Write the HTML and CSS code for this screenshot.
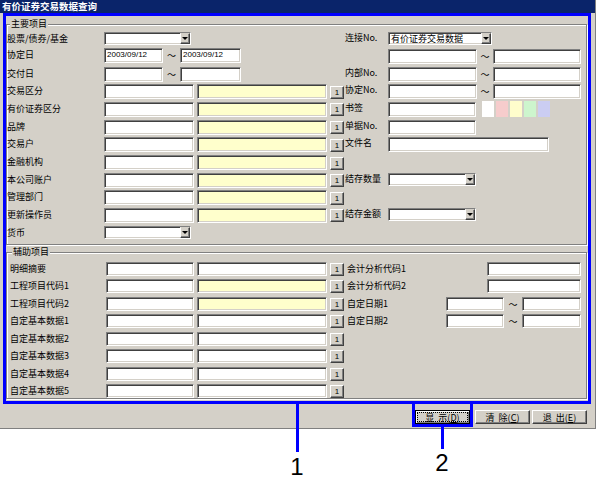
FILE: index.html
```html
<!DOCTYPE html>
<html lang="zh-CN">
<head>
<meta charset="utf-8">
<title>有价证券交易数据查询</title>
<link rel="stylesheet" href="styles.css">
</head>
<body>
<div class="page">
  <div class="window">
    <div class="titlebar">有价证券交易数据查询</div>
    <div class="frame">
      <div class="group main">
        <div class="legend">主要项目</div>
        <div class="grid grid-main">
          <div class="cell"><span class="lbl">股票/债券/基金</span><div class="sel w87"><span class="sv"></span><span class="dd"><i></i></span></div></div>
          <div class="cell"><span class="rl">连接No.</span><div class="sel w104"><span class="sv">有价证券交易数据</span><span class="dd"><i></i></span></div></div>

          <div class="cell"><span class="lbl">协定日</span><span class="in w59 date">2003/09/12</span><span class="tl w17">～</span><span class="in w61 date">2003/09/12</span></div>
          <div class="cell r2"><span class="rl"></span><span class="in w89"></span><span class="tl w16">～</span><span class="in w88"></span></div>

          <div class="cell"><span class="lbl">交付日</span><span class="in w59 date"></span><span class="tl w17">～</span><span class="in w61 date"></span></div>
          <div class="cell"><span class="rl">内部No.</span><span class="in w89"></span><span class="tl w16">～</span><span class="in w88"></span></div>

          <div class="cell"><span class="lbl">交易区分</span><span class="in w90"></span><span class="in w130 yel"></span><span class="b1">1</span></div>
          <div class="cell"><span class="rl">协定No.</span><span class="in w89"></span><span class="tl w16">～</span><span class="in w88"></span></div>

          <div class="cell"><span class="lbl">有价证券区分</span><span class="in w90"></span><span class="in w130 yel"></span><span class="b1">1</span></div>
          <div class="cell"><span class="rl">书签</span><span class="in w88"></span>
            <span class="swatches"><span class="sw s-white"></span><span class="sw s-pink"></span><span class="sw s-yellow"></span><span class="sw s-green"></span><span class="sw s-blue"></span></span></div>

          <div class="cell"><span class="lbl">品牌</span><span class="in w90"></span><span class="in w130 yel"></span><span class="b1">1</span></div>
          <div class="cell"><span class="rl">单据No.</span><span class="in w88"></span></div>

          <div class="cell"><span class="lbl">交易户</span><span class="in w90"></span><span class="in w130 yel"></span><span class="b1">1</span></div>
          <div class="cell"><span class="rl">文件名</span><span class="in w161"></span></div>

          <div class="cell"><span class="lbl">金融机构</span><span class="in w90"></span><span class="in w130 yel"></span><span class="b1">1</span></div>
          <div class="cell"></div>

          <div class="cell"><span class="lbl">本公司账户</span><span class="in w90"></span><span class="in w130 yel"></span><span class="b1">1</span></div>
          <div class="cell"><span class="rl">结存数量</span><div class="sel w88"><span class="sv"></span><span class="dd"><i></i></span></div></div>

          <div class="cell"><span class="lbl">管理部门</span><span class="in w90"></span><span class="in w130 yel"></span><span class="b1">1</span></div>
          <div class="cell"></div>

          <div class="cell"><span class="lbl">更新操作员</span><span class="in w90"></span><span class="in w130 yel"></span><span class="b1">1</span></div>
          <div class="cell"><span class="rl">结存金额</span><div class="sel w88"><span class="sv"></span><span class="dd"><i></i></span></div></div>

          <div class="cell"><span class="lbl">货币</span><div class="sel w87"><span class="sv"></span><span class="dd"><i></i></span></div></div>
          <div class="cell"></div>
        </div>
      </div>

      <div class="group aux">
        <div class="legend">辅助项目</div>
        <div class="grid grid-aux">
          <div class="cell"><span class="lbl">明细摘要</span><span class="in w88"></span><span class="in w130"></span><span class="b1">1</span></div>
          <div class="cell"><span class="al w140">会计分析代码1</span><span class="in w94"></span></div>

          <div class="cell"><span class="lbl">工程项目代码1</span><span class="in w88"></span><span class="in w130 yel"></span><span class="b1">1</span></div>
          <div class="cell"><span class="al w140">会计分析代码2</span><span class="in w94"></span></div>

          <div class="cell"><span class="lbl">工程项目代码2</span><span class="in w88"></span><span class="in w130 yel"></span><span class="b1">1</span></div>
          <div class="cell"><span class="al w99">自定日期1</span><span class="in w58"></span><span class="tl w18">～</span><span class="in w59"></span></div>

          <div class="cell"><span class="lbl">自定基本数据1</span><span class="in w88"></span><span class="in w130"></span><span class="b1">1</span></div>
          <div class="cell"><span class="al w99">自定日期2</span><span class="in w58"></span><span class="tl w18">～</span><span class="in w59"></span></div>

          <div class="cell"><span class="lbl">自定基本数据2</span><span class="in w88"></span><span class="in w130"></span><span class="b1">1</span></div>
          <div class="cell"></div>

          <div class="cell"><span class="lbl">自定基本数据3</span><span class="in w88"></span><span class="in w130"></span><span class="b1">1</span></div>
          <div class="cell"></div>

          <div class="cell"><span class="lbl">自定基本数据4</span><span class="in w88"></span><span class="in w130"></span><span class="b1">1</span></div>
          <div class="cell"></div>

          <div class="cell"><span class="lbl">自定基本数据5</span><span class="in w88"></span><span class="in w130"></span><span class="b1">1</span></div>
          <div class="cell"></div>
        </div>
      </div>
    </div>

    <div class="btnrow">
      <div class="mark"><button class="pb default"><span class="focus">显&nbsp;&nbsp;示(<u>D</u>)</span></button></div>
      <button class="pb">清&nbsp;&nbsp;除(<u>C</u>)</button>
      <button class="pb">退&nbsp;&nbsp;出(<u>E</u>)</button>
    </div>
  </div>

  <div class="callout c1"><div class="cline"></div><div class="cnum">1</div></div>
  <div class="callout c2"><div class="cline"></div><div class="cnum">2</div></div>
</div>
</body>
</html>
```

FILE: styles.css
```css
* { box-sizing: border-box; }

body {
  margin: 0;
  background: #ffffff;
  font-family: "Noto Sans CJK SC", "Liberation Sans", sans-serif;
  font-size: 9px;
  color: #000;
}

.page {
  position: relative;
  width: 598px;
  height: 482px;
}

.window {
  width: 596px;
  height: 429px;
  background: #d4d0c8;
  border-right: 1px solid #808080;
  border-bottom: 1px solid #808080;
}

.titlebar {
  height: 13px;
  background: #0a246a;
  color: #fff;
  font-weight: bold;
  font-size: 9.5px;
  line-height: 12px;
  padding-left: 2px;
  white-space: nowrap;
}

.frame {
  margin-left: 3px;
  width: 588px;
  border: 3px solid #0000ff;
}

.group {
  margin-right: 1px;
  border: 1px solid #808080;
  box-shadow: inset 1px 1px 0 #fff, 1px 1px 0 #fff;
}

.main {
  margin-top: 8px;
  padding-bottom: 5.5px;
}

.aux {
  margin-top: 7px;
  margin-bottom: 2px;
}

.legend {
  width: fit-content;
  height: 11px;
  line-height: 11px;
  margin: -7px 0 0 3px;
  padding: 0 1px;
  background: #d4d0c8;
  white-space: nowrap;
}

.aux .legend { margin-left: 5px; }

.grid { display: grid; }

.grid-main {
  margin-top: 3px;
  grid-template-columns: 338px 1fr;
  grid-template-rows: 16px 19px 17px 17.5px 18px 17.5px 18px 17.5px 17.5px 17.5px 18px 13px;
}

.grid-aux {
  margin-top: 4.5px;
  padding-left: 3px;
  grid-template-columns: 337px 1fr;
  grid-template-rows: repeat(7, 17.5px) 14px;
}

.cell {
  display: flex;
  align-items: flex-start;
  white-space: nowrap;
}

.r2 { margin-top: 1px; }

.lbl {
  width: 97px;
  line-height: 11px;
  padding-top: 1px;
}

.grid-aux .lbl { width: 96px; line-height: 12px; padding-top: 1px; }

.rl {
  width: 43px;
  line-height: 11px;
  padding-top: 0;
}

.al { line-height: 12px; padding-top: 1px; }

.w140 { width: 140px; }
.w99 { width: 99px; }

.in {
  display: block;
  height: 15px;
  background: #fff;
  border: 1px solid;
  border-color: #808080 #ffffff #ffffff #808080;
  box-shadow: inset 1px 1px 0 #404040, inset -1px -1px 0 #d4d0c8;
}

.grid-aux .in { height: 14px; }

.in.yel { background: #ffffcc; }

.in.date {
  font-family: "Liberation Sans", sans-serif;
  font-size: 8px;
  line-height: 12px;
  padding-left: 2px;
}

.w58 { width: 58px; }
.w59 { width: 59px; }
.w61 { width: 61px; }
.w88 { width: 88px; }
.w89 { width: 89px; }
.w90 { width: 90px; }
.w94 { width: 94px; }
.w161 { width: 161px; }
.w130 { width: 130px; margin-left: 3px; }

.tl {
  display: block;
  text-align: center;
  line-height: 15px;
  font-size: 9px;
}
.w16 { width: 16px; }
.w17 { width: 17px; }
.w18 { width: 18px; }

.b1 {
  display: block;
  width: 14px;
  height: 13px;
  margin-left: 3px;
  margin-top: 1.5px;
  background: #d4d0c8;
  border: 1px solid;
  border-color: #ffffff #404040 #404040 #ffffff;
  box-shadow: inset -1px -1px 0 #808080;
  font-family: "Liberation Sans", sans-serif;
  font-size: 8px;
  line-height: 11px;
  text-align: center;
}

.grid-aux .b1 { margin-top: 1px; }

.sel {
  display: flex;
  height: 13px;
  background: #fff;
  border: 1px solid;
  border-color: #808080 #ffffff #ffffff #808080;
  box-shadow: inset 1px 1px 0 #404040, inset -1px -1px 0 #d4d0c8;
}

.w87 { width: 87px; }
.w104 { width: 104px; }

.sv {
  flex: 1;
  padding-left: 2px;
  line-height: 11px;
  overflow: hidden;
}

.dd {
  display: flex;
  align-items: center;
  justify-content: center;
  width: 10px;
  height: 11px;
  background: #d4d0c8;
  border: 1px solid;
  border-color: #d4d0c8 #404040 #404040 #ffffff;
  box-shadow: inset -1px -1px 0 #808080;
}

.dd i {
  display: block;
  width: 0;
  height: 0;
  border-left: 3px solid transparent;
  border-right: 3px solid transparent;
  border-top: 3px solid #000;
}

.swatches {
  display: flex;
  gap: 2px;
  margin-left: 6px;
  margin-top: -0.5px;
}

.sw { display: block; width: 12px; height: 16px; }
.s-white { background: #ffffff; }
.s-pink { background: #f6cccc; }
.s-yellow { background: #fffdcc; }
.s-green { background: #cdf5cd; }
.s-blue { background: #cbcdf2; }

.btnrow {
  display: flex;
  align-items: flex-start;
  height: 24px;
  padding-left: 412px;
  gap: 2px;
}

.mark {
  width: 61px;
  height: 23px;
  border: 3px solid #0000ff;
  border-top: none;
  padding-top: 6px;
}

.pb {
  display: block;
  width: 55px;
  height: 14px;
  margin: 6px 0 0 0;
  padding: 0;
  background: #d4d0c8;
  border: 1px solid;
  border-color: #ffffff #404040 #404040 #ffffff;
  box-shadow: inset -1px -1px 0 #808080;
  font-family: "Noto Sans CJK SC", "Liberation Sans", sans-serif;
  font-size: 9px;
  line-height: 11px;
  color: #000;
  text-align: center;
}

.mark .pb {
  margin: 0;
  border-color: #000;
  box-shadow: inset 1px 1px 0 #fff, inset -1px -1px 0 #808080;
}

.focus {
  display: block;
  margin: 1px 1px;
  border: 1px dotted #000;
  line-height: 9px;
  height: 10px;
}

.pb u { text-decoration: underline; }

.callout {
  position: absolute;
  display: flex;
  flex-direction: column;
  align-items: center;
}

.c1 { left: 285px; top: 404px; width: 24px; }
.c2 { left: 430px; top: 427px; width: 24px; }

.cline { width: 3px; background: #0000ff; }
.c1 .cline { height: 48px; }
.c2 .cline { height: 22px; }

.cnum {
  font-family: "Liberation Sans", Arial, sans-serif;
  font-size: 24px;
  line-height: 24px;
  color: #000;
}
.c1 .cnum { margin-top: 3px; }
.c2 .cnum { margin-top: 2px; }
```
